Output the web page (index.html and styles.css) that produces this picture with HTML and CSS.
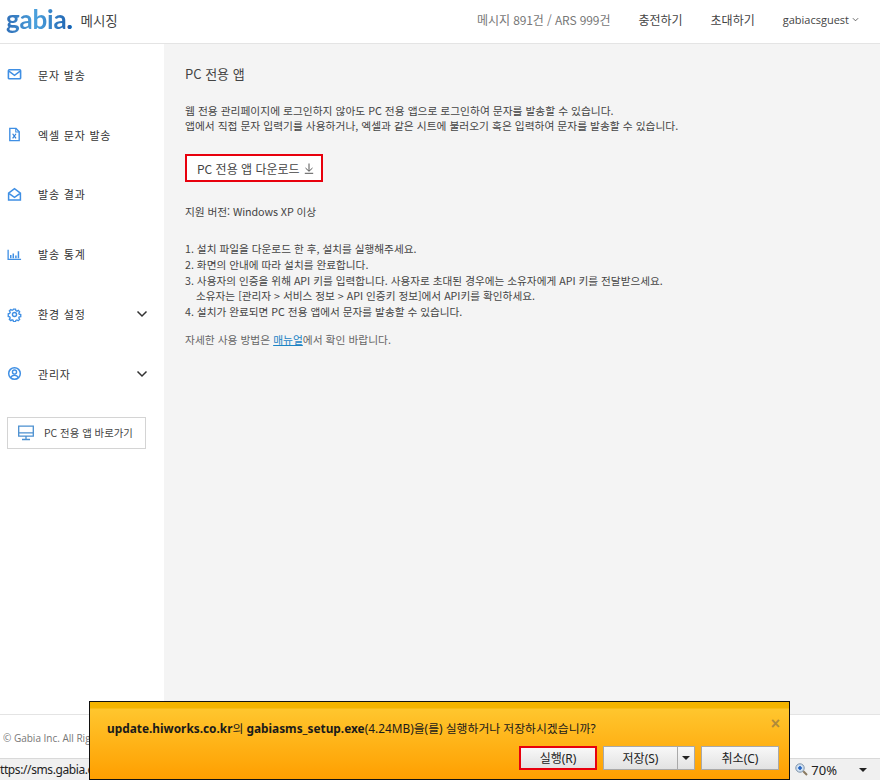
FILE: index.html
```html
<!DOCTYPE html>
<html lang="ko">
<head>
<meta charset="utf-8">
<title>PC 전용 앱</title>
<link rel="stylesheet" href="styles.css">
</head>
<body>
<div class="page">
  <header class="top">
    <div class="brand"><span class="logo">gabia<span class="dot">.</span></span><span class="brand-name">메시징</span></div>
    <nav class="top-nav">
      <span class="quota">메시지 891건 / ARS 999건</span>
      <a class="top-link">충전하기</a>
      <a class="top-link">초대하기</a>
      <a class="top-link user">gabiacsguest<svg class="caret-sm" viewBox="0 0 8 5"><path d="M1 1l3 3 3-3" fill="none" stroke="#555" stroke-width="1"/></svg></a>
    </nav>
  </header>
  <div class="middle">
    <aside class="side">
      <ul class="menu">
        <li class="item"><svg class="ico" viewBox="0 0 16 16"><rect x="1.500" y="3" width="13" height="9.600" rx="1" fill="none" stroke="#3f8fe4" stroke-width="1.700"/><path d="M2 4.500l6 4.300 6-4.300" fill="none" stroke="#3f8fe4" stroke-width="1.600"/></svg><span>문자 발송</span></li>
        <li class="item"><svg class="ico" viewBox="0 0 16 16"><path d="M3 1.500h6.600L13 5v9.500H3z" fill="none" stroke="#3f8fe4" stroke-width="1.500"/><path d="M9.300 1.500v3.800H13" fill="none" stroke="#3f8fe4" stroke-width="1.100"/><path d="M6 7.200l3.600 5M9.600 7.200L6 12.200" fill="none" stroke="#2f7fd8" stroke-width="1.300"/></svg><span>엑셀 문자 발송</span></li>
        <li class="item"><svg class="ico" viewBox="0 0 16 16"><path d="M1.700 6.500L8 1.700l6.300 4.800v7.300H1.700z" fill="none" stroke="#3f8fe4" stroke-width="1.600"/><path d="M2.300 7l5.700 4 5.700-4" fill="none" stroke="#3f8fe4" stroke-width="1.600"/></svg><span>발송 결과</span></li>
        <li class="item"><svg class="ico" viewBox="0 0 16 16"><path d="M1.200 3v10.200h13.800" fill="none" stroke="#3f8fe4" stroke-width="1.400"/><path d="M4 8.500v3.500M6.700 7v5M9.500 9v3M12.200 4.500V12" fill="none" stroke="#3f8fe4" stroke-width="1.600"/></svg><span>발송 통계</span></li>
        <li class="item"><svg class="ico" viewBox="0 0 16 16"><circle cx="8" cy="8" r="2.200" fill="none" stroke="#3f8fe4" stroke-width="1.500"/><path d="M6.800 1.600h2.400l.4 1.800 1.300.6 1.600-.9 1.600 1.700-1 1.500.5 1.300 1.800.5v2.400l-1.800.4-.5 1.300 1 1.600-1.700 1.600-1.500-1-1.300.6-.4 1.400H6.800l-.4-1.500-1.300-.6-1.500 1-1.700-1.600 1-1.600-.6-1.300-1.700-.4V7.100l1.700-.5.600-1.300-1-1.500 1.700-1.700 1.500.9 1.300-.6z" transform="translate(.8 .8) scale(.9)" fill="none" stroke="#3f8fe4" stroke-width="1.600"/></svg><span>환경 설정</span><svg class="chev" viewBox="0 0 12 8"><path d="M1.500 1.500L6 6l4.500-4.500" fill="none" stroke="#333" stroke-width="1.500"/></svg></li>
        <li class="item"><svg class="ico" viewBox="0 0 16 16"><circle cx="8" cy="8" r="6.200" fill="none" stroke="#3f8fe4" stroke-width="1.600"/><circle cx="8" cy="6.500" r="2.200" fill="none" stroke="#3f8fe4" stroke-width="1.500"/><path d="M3.800 12.500c1-2 2.500-2.700 4.200-2.700s3.200.7 4.200 2.700" fill="none" stroke="#3f8fe4" stroke-width="1.500"/></svg><span>관리자</span><svg class="chev" viewBox="0 0 12 8"><path d="M1.500 1.500L6 6l4.500-4.500" fill="none" stroke="#333" stroke-width="1.500"/></svg></li>
      </ul>
      <a class="pc-link"><svg class="pc-ico" viewBox="0 0 16 16"><path d="M.7 1.200h14.600v10H.7zM.7 7.800h14.600M8 11.200v3M4 14.500h8" fill="none" stroke="#4a8fd0" stroke-width="1.300"/></svg><span>PC 전용 앱 바로가기</span></a>
    </aside>
    <main class="main">
      <h1 class="title">PC 전용 앱</h1>
      <p class="intro">웹 전용 관리페이지에 로그인하지 않아도 PC 전용 앱으로 로그인하여 문자를 발송할 수 있습니다.<br>앱에서 직접 문자 입력기를 사용하거나, 엑셀과 같은 시트에 불러오기 혹은 입력하여 문자를 발송할 수 있습니다.</p>
      <a class="download"><span>PC 전용 앱 다운로드</span><svg class="down" viewBox="0 0 10 11"><path d="M5 .5v7.500M1.500 5L5 8.300 8.500 5M.8 10.300h8.400" fill="none" stroke="#555" stroke-width="1"/></svg></a>
      <p class="support">지원 버전: Windows XP 이상</p>
      <ol class="steps">
        <li>1. 설치 파일을 다운로드 한 후, 설치를 실행해주세요.</li>
        <li>2. 화면의 안내에 따라 설치를 완료합니다.</li>
        <li>3. 사용자의 인증을 위해 API 키를 입력합니다. 사용자로 초대된 경우에는 소유자에게 API 키를 전달받으세요.</li>
        <li class="cont">소유자는 [관리자 &gt; 서비스 정보 &gt; API 인증키 정보]에서 API키를 확인하세요.</li>
        <li>4. 설치가 완료되면 PC 전용 앱에서 문자를 발송할 수 있습니다.</li>
      </ol>
      <p class="manual">자세한 사용 방법은 <a class="manual-link">매뉴얼</a>에서 확인 바랍니다.</p>
    </main>
  </div>
  <footer class="foot"><span class="foot-text">© Gabia Inc. All Rights Reserved.</span></footer>
  <div class="status">
    <span class="url"><span class="url-text">ttps://sms.gabia.com/</span></span>
    <span class="zoom-box"><svg class="zoom-ico" viewBox="0 0 13 13"><circle cx="5" cy="5" r="4.200" fill="#cfe0f2" stroke="#7f93a8"/><path d="M3 5h4M5 3v4" stroke="#1f5fc0" stroke-width="1.600"/><path d="M8.300 8.300L12 12" stroke="#8a7a60" stroke-width="2"/></svg>70%</span>
    <span class="tri dark status-tri"></span>
  </div>
  <div class="dialog">
    <button class="close" type="button">×</button>
    <p class="msg"><b>update.hiworks.co.kr</b>의 <b>gabiasms_setup.exe</b>(4.24MB)을(를) 실행하거나 저장하시겠습니까?</p>
    <div class="actions">
      <button class="btn run" type="button">실행(R)</button>
      <div class="split"><button class="btn save" type="button">저장(S)</button><button class="btn arrow" type="button"><span class="tri dark"></span></button></div>
      <button class="btn cancel" type="button">취소(C)</button>
    </div>
  </div>
</div>
</body>
</html>
```
FILE: styles.css
```css
* { box-sizing: border-box; }
html, body { margin: 0; padding: 0; }
body { font-family: "Open Sans", "Noto Sans CJK KR", sans-serif; color: #333; background: #fff; }
.page { position: relative; width: 880px; height: 780px; overflow: hidden; display: flex; flex-direction: column; }
.top { height: 44px; flex: none; display: flex; align-items: center; justify-content: space-between; background: #fff; border-bottom: 1px solid #e4e4e4; padding: 0 21px 4px 6px; }
.brand { display: flex; align-items: center; gap: 8px; }
.logo { font-family: Lato, sans-serif; font-weight: 700; font-size: 26px; line-height: 34px; letter-spacing: -.2px; background: linear-gradient(90deg, #2f6fb8, #4aa0dc 45%, #1d5fae); -webkit-background-clip: text; background-clip: text; color: transparent; margin-top: -2px; }
.dot { color: #1d5fae; }
.brand-name { font-family: "Noto Sans CJK KR", sans-serif; font-size: 13.500px; color: #444; }
.top-nav { display: flex; align-items: center; gap: 28px; font-size: 12px; font-family: "Noto Sans CJK KR", sans-serif; }
.quota { color: #777; letter-spacing: -.1px; }
.top-link { color: #444; }
.user { font-family: "Open Sans", sans-serif; font-size: 11px; display: flex; align-items: center; gap: 3px; }
.caret-sm { width: 7px; height: 5px; }
.middle { flex: 1; display: flex; min-height: 0; }
.side { width: 164px; flex: none; background: #fff; padding: 1px 0 0 7px; }
.menu { list-style: none; margin: 0; padding: 0; }
.item { height: 59.800px; display: flex; align-items: center; font-family: "Noto Sans CJK KR", sans-serif; font-size: 11px; letter-spacing: .8px; color: #333; position: relative; }
.ico { width: 15px; height: 15px; margin-right: 16px; flex: none; }
.chev { width: 12px; height: 8px; position: absolute; left: 129px; top: 26px; }
.pc-link { display: flex; align-items: center; width: 139px; height: 32px; margin-top: 13px; border: 1px solid #d4d4d4; background: #fff; padding-left: 10px; font-family: "Noto Sans CJK KR", sans-serif; font-size: 10.400px; color: #444; gap: 10px; }
.pc-ico { width: 16px; height: 16px; flex: none; }
.main { flex: 1; background: #f4f4f4; padding: 21px 0 0 21px; font-family: "Noto Sans CJK KR", sans-serif; font-size: 10.750px; color: #444; }
.title { margin: 0; font-size: 13px; font-weight: 400; line-height: 18px; color: #444; }
.intro { margin: 20px 0 0; line-height: 15px; }
.download { display: flex; align-items: center; width: 138px; height: 28px; margin-top: 21px; border: 2px solid #e8000d; background: #fff; padding-left: 10px; gap: 4px; font-size: 12px; color: #444; }
.down { width: 10px; height: 11px; }
.support { margin: 22px 0 0; line-height: 15px; letter-spacing: -.1px; }
.steps { list-style: none; margin: 22px 0 0; padding: 0; line-height: 15.800px; font-size: 10.650px; }
.cont { padding-left: 11px; }
.manual { margin: 12px 0 0; line-height: 15px; color: #666; }
.manual-link { color: #1b83c4; text-decoration: underline; }
.foot { height: 44px; flex: none; background: #fff; border-top: 1px solid #e4e4e4; padding: 16px 0 0 3px; font-size: 10px; color: #777; }
.foot-text { display: block; width: 86px; overflow: hidden; white-space: nowrap; }
.status { height: 22px; flex: none; display: flex; align-items: center; background: #f0f0f0; border-top: 1px solid #d9d9d9; font-family: "Noto Sans", sans-serif; font-size: 12px; color: #222; position: relative; padding-right: 13px; }
.url { flex: 1; letter-spacing: -.4px; }
.url-text { display: block; width: 89px; overflow: hidden; white-space: nowrap; }
.zoom-box { display: flex; align-items: center; gap: 3px; font-size: 13px; margin-right: 22px; }
.zoom-ico { width: 13px; height: 13px; }
.tri { display: inline-block; width: 0; height: 0; border-left: 4px solid transparent; border-right: 4px solid transparent; border-top: 4px solid #222; }
.dialog { position: absolute; left: 89px; top: 701px; width: 701px; height: 79px; border: 1px solid #111; background: linear-gradient(#f4b400 0, #f4b400 6px, #ffc62e 7px, #ff9f00 100%); padding: 12px 0 0 17px; font-family: "Noto Sans", "Noto Sans CJK KR", sans-serif; font-size: 11.850px; color: #1a1a1a; }
.msg { margin: 0; line-height: 28px; padding-top: 0; }
.msg b { font-weight: 700; }
.close { position: absolute; right: 9px; top: 14px; padding: 0; border: 0; background: none; font-size: 16px; line-height: 16px; font-weight: 700; color: #b08a3a; font-family: "Liberation Sans", sans-serif; }
.actions { position: absolute; left: 429px; top: 44px; display: flex; gap: 6px; }
.btn { height: 24px; padding: 0; border: 1px solid #a9a9a9; background: linear-gradient(#f8f8f8, #e2e2e2); font-family: "Noto Sans", "Noto Sans CJK KR", sans-serif; font-size: 12px; color: #222; display: flex; align-items: center; justify-content: center; }
.run { width: 78px; border: 2px solid #e8000d; }
.split { display: flex; }
.save { width: 75px; }
.arrow { width: 17px; border-left: 0; }
.cancel { width: 78px; }
```
